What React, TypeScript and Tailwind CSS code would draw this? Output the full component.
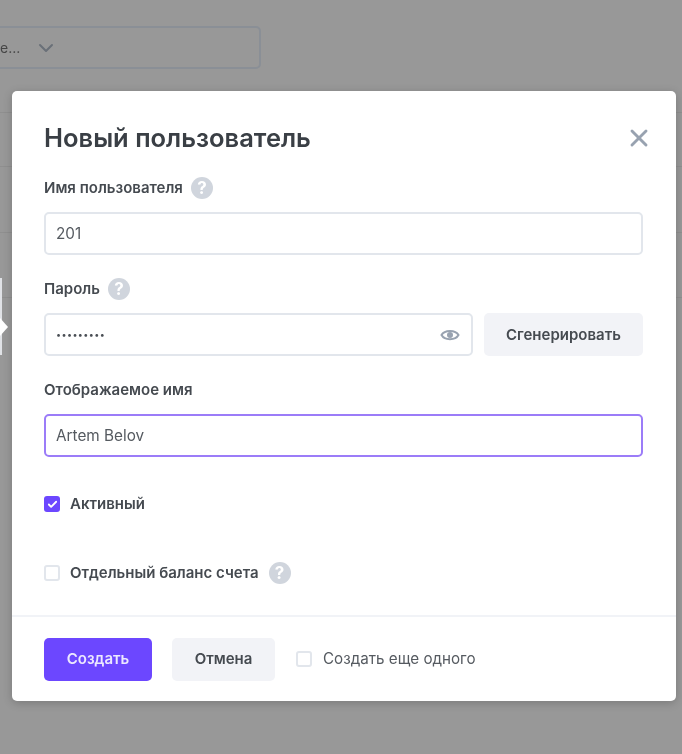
import { Check, ChevronDown, X } from "lucide-react";

function HelpIcon() {
  return (
    <span className="flex h-[22px] w-[22px] items-center justify-center rounded-full bg-[#d0d5dd] text-[17px] font-bold leading-none text-white">
      ?
    </span>
  );
}

function BackgroundRow({ className }: { className: string }) {
  return <div className={className} />;
}

export default function App() {
  return (
    <div className="relative h-[754px] w-[682px] overflow-hidden bg-[#989898] font-['Inter','Liberation_Sans',sans-serif] blur-[0.4px]">
      {/* Страница под затемнением */}
      <div className="flex h-[69px] items-end">
        <div className="flex h-[43px] w-[261px] items-center rounded-r-[5px] border-2 border-l-0 border-[#8a8f96]">
          <span className="text-[14px] text-[#454545]">e...</span>
          <ChevronDown className="ml-[14px] h-[24px] w-[24px] text-[#6a7078]" strokeWidth={2} />
        </div>
      </div>
      <BackgroundRow className="mt-[43px] h-[54px] border-t border-[#8f8f8f]" />
      <BackgroundRow className="h-[66px] border-t border-[#8f8f8f]" />
      <BackgroundRow className="h-[65px] border-t border-[#8f8f8f]" />
      <BackgroundRow className="h-[65px] border-t border-[#8f8f8f]" />

      {/* Модальное окно */}
      <div className="absolute left-[12px] top-[91px] h-[610px] w-[664px] rounded-[5px] bg-white shadow-[0_2px_10px_rgba(0,0,0,0.2)]">
        <div className="px-8 pt-[28px]">
          <div className="flex h-[38px] items-center justify-between">
            <h1 className="text-[25.5px] font-semibold leading-none text-[#3a3f45]">Новый пользователь</h1>
            <X className="mr-[-9px] h-[28px] w-[28px] text-[#98a2b0]" strokeWidth={2.5} />
          </div>

          <div className="mt-[20px] flex h-[22px] items-center gap-[8px]">
            <label className="text-[15px] font-semibold text-[#454a50]">Имя пользователя</label>
            <HelpIcon />
          </div>
          <div className="mt-[13px] flex h-[43px] w-[599px] items-center rounded-[5px] border-2 border-[#e2e6ec] px-[10px] pt-px text-[15.3px] text-[#555a60]">
            201
          </div>

          <div className="mt-[23px] flex h-[22px] items-center gap-[8px]">
            <label className="text-[15px] font-semibold text-[#454a50]">Пароль</label>
            <HelpIcon />
          </div>
          <div className="mt-[13px] flex w-[599px] gap-[11px]">
            <div className="flex h-[43px] flex-1 items-center justify-between rounded-[5px] border-2 border-[#e2e6ec] pl-[10px] pr-[11px] text-[9px] tracking-[0.4px] text-[#4a4f55]">
              <span>•••••••••</span>
              <svg viewBox="0 0 20 20" className="h-[20px] w-[20px] text-[#98a2b0]" fill="none">
                <path d="M1.5 10C4.5 4.5 15.5 4.5 18.5 10C15.5 15.5 4.5 15.5 1.5 10Z" stroke="currentColor" strokeWidth="2" />
                <circle cx="10" cy="10" r="3" fill="currentColor" />
              </svg>
            </div>
            <button className="h-[43px] w-[159px] rounded-[5px] bg-[#f2f3f7] pt-px text-[15px] font-semibold text-[#454a50]">
              Сгенерировать
            </button>
          </div>

          <div className="mt-[23px] flex h-[22px] items-center">
            <label className="text-[15px] font-semibold text-[#454a50]">Отображаемое имя</label>
          </div>
          <div className="mt-[13px] flex h-[43px] w-[599px] items-center rounded-[5px] border-2 border-[#9b7cf8] px-[10px] pt-px text-[15.3px] text-[#555a60]">
            Artem Belov
          </div>

          <div className="mt-[36px] flex h-[22px] items-center gap-[10px]">
            <span className="flex h-[16px] w-[16px] items-center justify-center rounded-[3px] bg-[#6c47ff]">
              <Check className="h-[11px] w-[11px] text-white" strokeWidth={4} />
            </span>
            <span className="text-[15px] font-semibold text-[#454a50]">Активный</span>
          </div>

          <div className="mt-[47px] flex h-[22px] items-center gap-[10px]">
            <span className="h-[16px] w-[16px] rounded-[3px] border-2 border-[#e2e6ec]" />
            <span className="text-[15px] font-semibold text-[#454a50]">Отдельный баланс счета</span>
            <HelpIcon />
          </div>
        </div>

        <div className="mt-[31px] flex h-[86px] items-center border-t-2 border-[#f1f3f7] px-8">
          <button className="h-[43px] w-[108px] rounded-[5px] bg-[#6c47ff] pt-px text-[15px] font-semibold text-[#ece8ff]">
            Создать
          </button>
          <button className="ml-[20px] h-[43px] w-[103px] rounded-[5px] bg-[#f2f3f7] pt-px text-[15px] font-semibold text-[#454a50]">
            Отмена
          </button>
          <span className="ml-[21px] h-[16px] w-[16px] rounded-[3px] border-2 border-[#e2e6ec]" />
          <span className="ml-[11px] pt-px text-[15.2px] text-[#555a60]">Создать еще одного</span>
        </div>
      </div>

      {/* Край всплывающей подсказки слева */}
      <div className="absolute left-0 top-[278px] h-[77px] w-[2px] bg-[#e0e2e6]" />
      <div className="absolute left-0 top-[318px] h-0 w-0 border-y-[9px] border-l-[8px] border-y-transparent border-l-white" />
    </div>
  );
}
